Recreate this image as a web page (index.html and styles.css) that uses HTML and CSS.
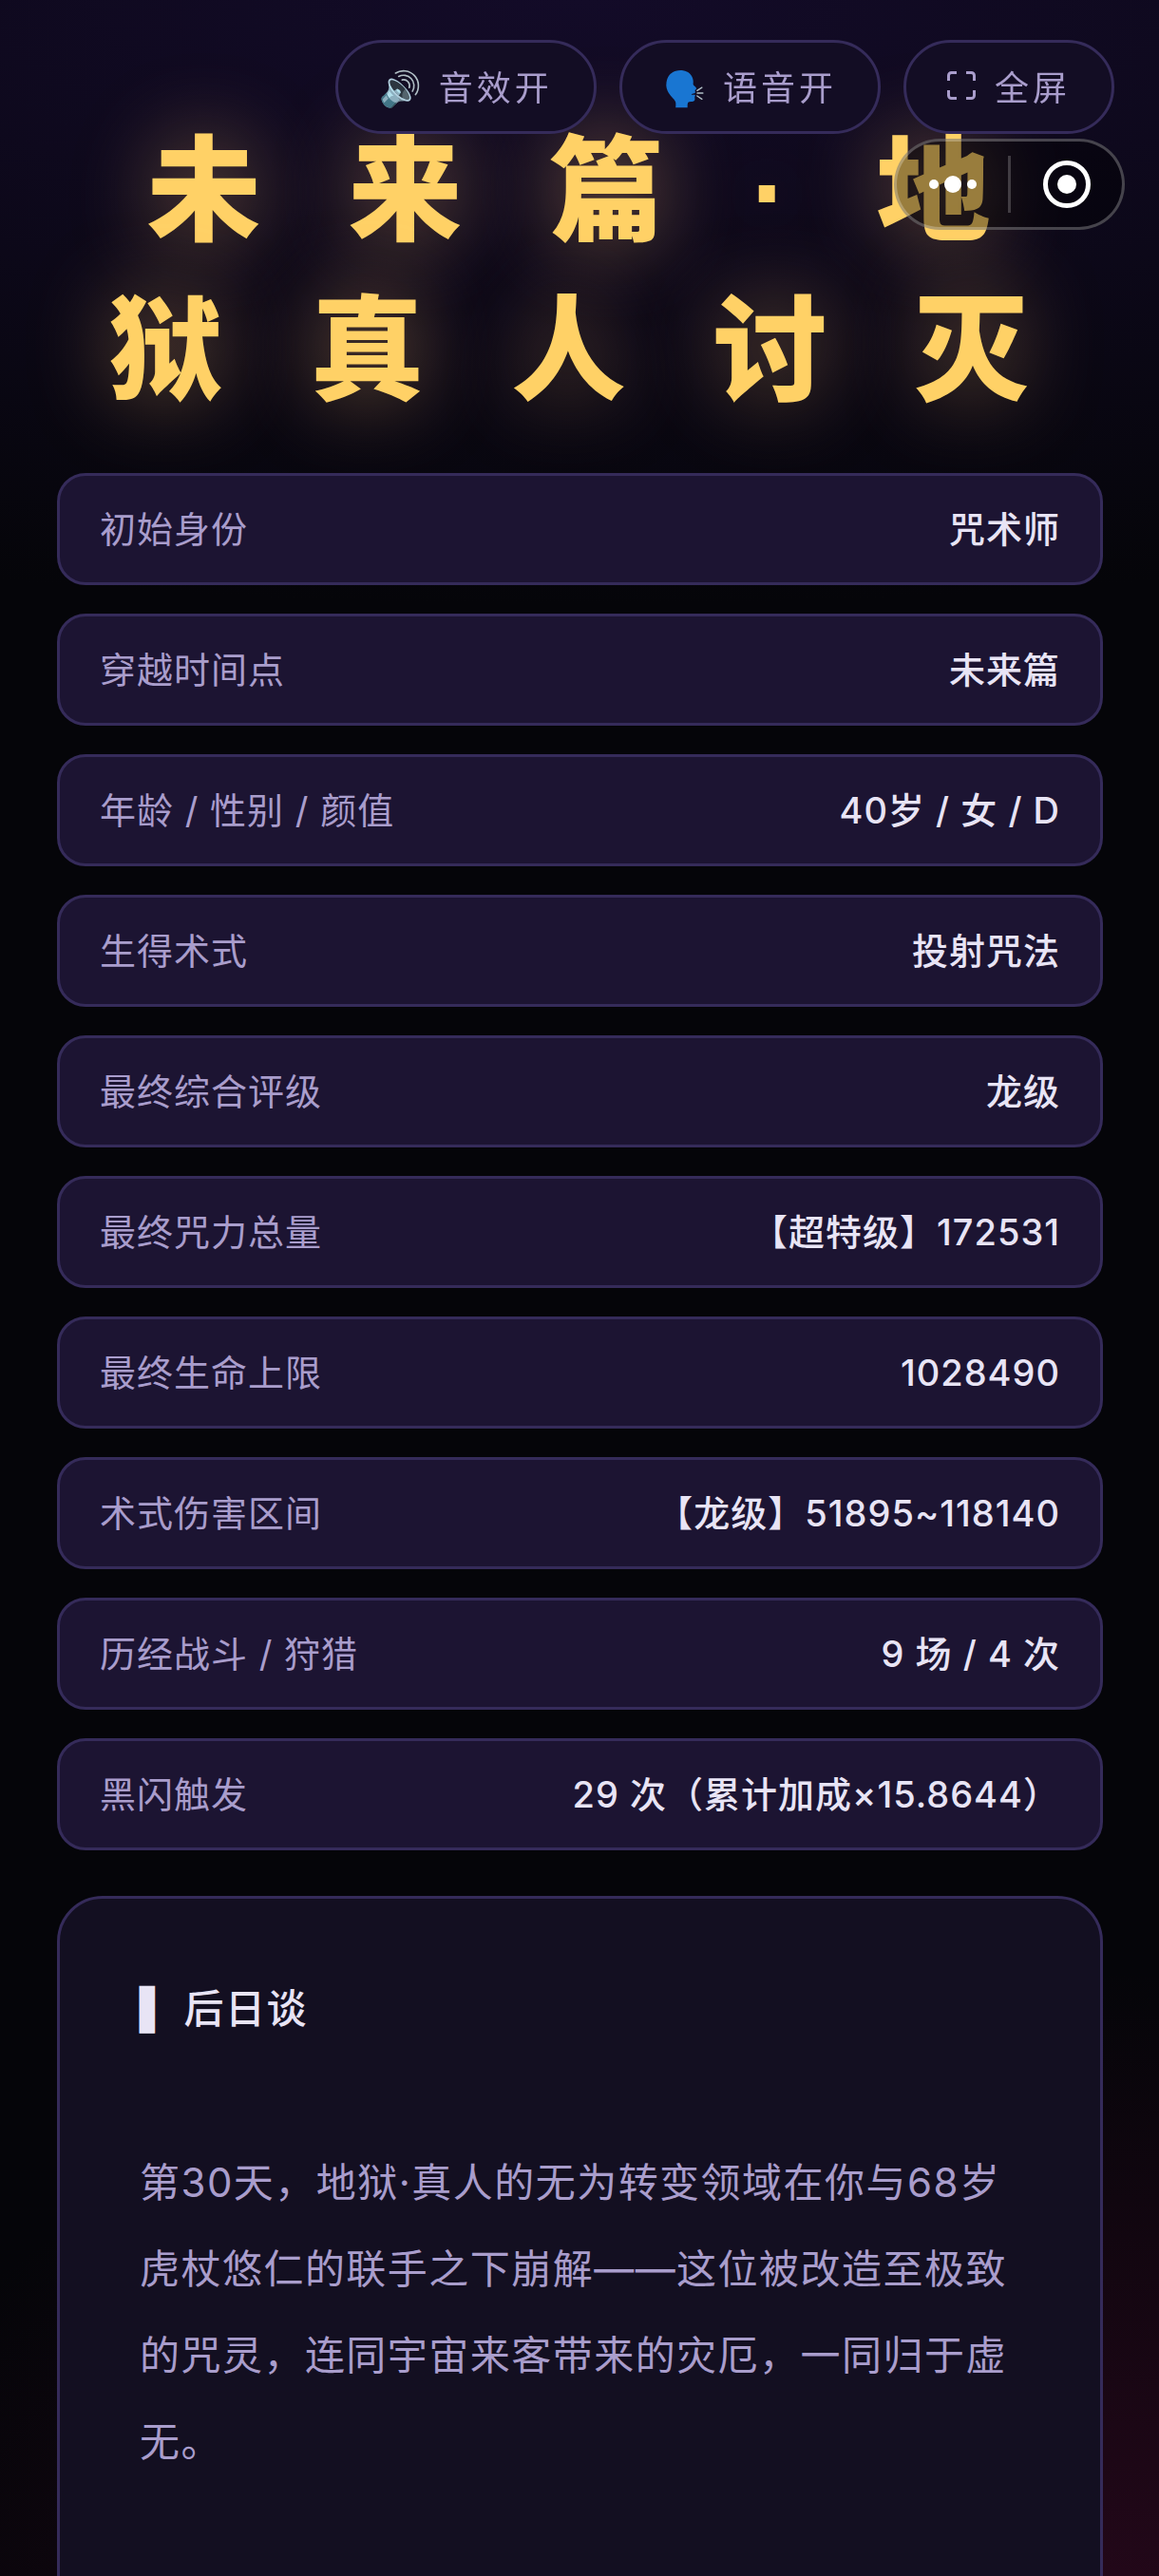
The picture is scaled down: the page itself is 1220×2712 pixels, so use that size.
FILE: index.html
```html
<!DOCTYPE html>
<html lang="zh-CN">

<head>
    <meta charset="UTF-8">
    <meta name="viewport" content="width=device-width, initial-scale=1.0">
    <title>未来篇·地狱真人讨灭</title>
    <link rel="stylesheet" href="styles.css">
</head>

<body>
    <div class="toolbar">
        <button type="button" class="tool">🔊 音效开</button>
        <button type="button" class="tool">🗣️ 语音开</button>
        <button type="button" class="tool">
            <svg class="tool-icon" viewBox="0 0 30 30" aria-hidden="true">
                <path d="M1.5 10V4.5a3 3 0 0 1 3-3H10M20 1.5h5.500a3 3 0 0 1 3 3V10M28.500 20v5.500a3 3 0 0 1-3 3H20M10 28.500H4.500a3 3 0 0 1-3-3V20" />
            </svg>
            全屏
        </button>
    </div>

    <div class="capsule">
        <button type="button" class="capsule-btn" aria-label="更多">
            <svg class="dots" viewBox="0 0 50 18">
                <circle cx="5" cy="9" r="5" />
                <circle cx="25" cy="9" r="9" />
                <circle cx="45" cy="9" r="5" />
            </svg>
        </button>
        <button type="button" class="capsule-btn" aria-label="关闭">
            <svg class="target" viewBox="0 0 50 50">
                <circle class="ring" cx="25" cy="25" r="22.500" />
                <circle cx="25" cy="25" r="10" />
            </svg>
        </button>
    </div>

    <main class="container">
        <h1 class="title">未来篇·地狱真人讨灭</h1>

        <dl class="stats">
            <div class="row"><dt>初始身份</dt><dd>咒术师</dd></div>
            <div class="row"><dt>穿越时间点</dt><dd>未来篇</dd></div>
            <div class="row"><dt>年龄 / 性别 / 颜值</dt><dd>40岁 / 女 / D</dd></div>
            <div class="row"><dt>生得术式</dt><dd>投射咒法</dd></div>
            <div class="row"><dt>最终综合评级</dt><dd>龙级</dd></div>
            <div class="row"><dt>最终咒力总量</dt><dd>【超特级】172531</dd></div>
            <div class="row"><dt>最终生命上限</dt><dd>1028490</dd></div>
            <div class="row"><dt>术式伤害区间</dt><dd>【龙级】51895~118140</dd></div>
            <div class="row"><dt>历经战斗 / 狩猎</dt><dd>9 场 / 4 次</dd></div>
            <div class="row"><dt>黑闪触发</dt><dd>29 次（累计加成×15.8644）</dd></div>
        </dl>

        <section class="story">
            <h2><span class="bar">▌</span> 后日谈</h2>
            <p>第30天，地狱·真人的无为转变领域在你与68岁虎杖悠仁的联手之下崩解——这位被改造至极致的咒灵，连同宇宙来客带来的灾厄，一同归于虚无。</p>
        </section>
    </main>
</body>

</html>
```
FILE: styles.css
```css
* {
    padding: 0;
    margin: 0;
    box-sizing: border-box;
}

body {
    min-height: 100vh;
    overflow-x: hidden;
    font-family: Inter, "Noto Sans CJK SC", sans-serif;
    color: #e8e4f5;
    background:
        radial-gradient(ellipse 180% 23% at 50% 0, #130b28, transparent),
        radial-gradient(ellipse 110% 27% at 90% 102%, #28081c, transparent),
        #050509;
}

button {
    font: inherit;
    color: inherit;
    background: none;
    border: none;
    cursor: pointer;
}

/* 顶部按钮 */
.toolbar {
    position: fixed;
    top: 42px;
    right: 47px;
    z-index: 10;
    display: flex;
    gap: 24px;
}

.tool {
    display: flex;
    align-items: center;
    height: 99px;
    padding: 0 43px 4px;
    font-size: 36px;
    letter-spacing: 4px;
    color: #a99dcc;
    background: #130d24;
    border: 3px solid #352b5a;
    border-radius: 50px;
}

.tool-icon {
    width: 30px;
    height: 30px;
    margin-right: 20px;
    fill: none;
    stroke: #a99dcc;
    stroke-width: 3;
}

/* 小程序胶囊 */
.capsule {
    position: fixed;
    top: 146px;
    right: 36px;
    z-index: 11;
    display: flex;
    width: 243px;
    height: 96px;
    padding: 15px 0;
    background: rgba(0, 0, 0, .4);
    border: 3px solid rgba(255, 255, 255, .25);
    border-radius: 48px;
}

.capsule-btn {
    display: flex;
    flex: 1;
    justify-content: center;
    align-items: center;
}

.capsule-btn + .capsule-btn {
    border-left: 3px solid rgba(255, 255, 255, .2);
}

.capsule svg {
    fill: white;
}

.dots {
    width: 50px;
    height: 18px;
}

.target {
    width: 50px;
    height: 50px;
}

.target .ring {
    fill: none;
    stroke: white;
    stroke-width: 5;
}

.container {
    padding: 118px 59px 0 60px;
}

.title {
    margin: 0 -34px 44px 34px;
    font-family: "Liberation Sans", "Noto Sans CJK SC", sans-serif;
    font-size: 120px;
    font-weight: 900;
    line-height: 168px;
    letter-spacing: 92px;
    text-align: center;
    color: #ffd166;
    text-shadow: 0 0 90px rgba(255, 190, 110, .45);
}

/* 结算数据 */
.stats {
    display: flex;
    flex-direction: column;
    gap: 30px;
}

.row {
    display: flex;
    justify-content: space-between;
    padding: 30px 42px;
    font-size: 38px;
    line-height: 52px;
    letter-spacing: 1px;
    background: #1c1432;
    border: 3px solid #352b5a;
    border-radius: 30px;
}

.row dt {
    color: #a99dcc;
}

.row dd {
    font-weight: 500;
}

/* 后日谈 */
.story {
    margin-top: 48px;
    padding: 70px 84px 150px;
    font-size: 42px;
    line-height: 91px;
    letter-spacing: .035em;
    background: #130f21;
    border: 3px solid #352b5a;
    border-radius: 48px;
}

.story h2 {
    margin-bottom: 91px;
    font-size: 42px;
    font-weight: 500;
}

.story .bar {
    font-family: "DejaVu Sans", sans-serif;
}

.story p {
    color: #a99dcc;
}
```
